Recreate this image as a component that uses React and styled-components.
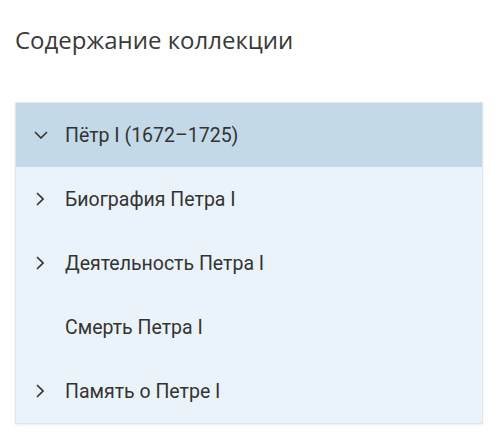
import React from "react";
import styled, { createGlobalStyle } from "styled-components";

const Global = createGlobalStyle`
  body {
    margin: 0;
    background: #fff;
  }
`;

const Page = styled.div`
  padding: 24px 17px 15px 15px;
`;

const Title = styled.h2`
  margin: 0 0 46px 0;
  font-family: "Open Sans", sans-serif;
  font-weight: 400;
  font-size: 24px;
  line-height: 32px;
  color: #3a3a3a;
`;

const Panel = styled.div`
  background: #ebf3fa;
  border: 1px solid #dfe6ec;
  box-shadow: 0 1px 2px rgba(0, 0, 0, 0.08);
`;

const Row = styled.div`
  height: 64px;
  display: flex;
  align-items: center;
  background: ${(p) => (p.$active ? "#c4d9e7" : "transparent")};
  font-family: Roboto, "Liberation Sans", sans-serif;
  font-size: 19.5px;
  color: #333;
`;

const Icon = styled.span`
  width: 49px;
  display: flex;
  align-items: center;
  padding-left: ${(p) => (p.$open ? "18px" : "20px")};
  box-sizing: border-box;
`;

const Chevron = ({ open }) =>
  open ? (
    <svg width="14" height="8" viewBox="0 0 14 8" fill="none">
      <path d="M1 1 L7 7 L13 1" stroke="#333" strokeWidth="1.6" />
    </svg>
  ) : (
    <svg width="8" height="14" viewBox="0 0 8 14" fill="none">
      <path d="M1 1 L7 7 L1 13" stroke="#333" strokeWidth="1.6" />
    </svg>
  );

const items = [
  { label: "Пётр I (1672–1725)", open: true, active: true, arrow: true },
  { label: "Биография Петра I", arrow: true },
  { label: "Деятельность Петра I", arrow: true },
  { label: "Смерть Петра I", arrow: false },
  { label: "Память о Петре I", arrow: true },
];

export default function App() {
  return (
    <Page>
      <Global />
      <Title>Содержание коллекции</Title>
      <Panel>
        {items.map((it) => (
          <Row key={it.label} $active={it.active}>
            <Icon $open={it.open}>{it.arrow && <Chevron open={it.open} />}</Icon>
            {it.label}
          </Row>
        ))}
      </Panel>
    </Page>
  );
}
